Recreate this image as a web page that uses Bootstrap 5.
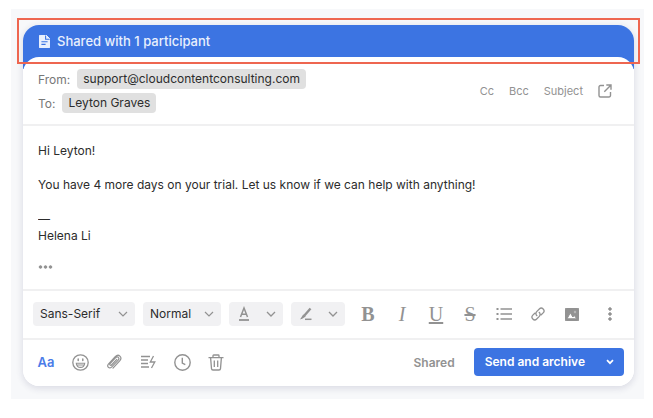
<!DOCTYPE html>
<html lang="en">
<head>
<meta charset="utf-8">
<meta name="viewport" content="width=device-width, initial-scale=1">
<title>Shared draft</title>
<link href="https://cdn.jsdelivr.net/npm/bootstrap@5.3.0/dist/css/bootstrap.min.css" rel="stylesheet">
<style>
  :root { --accent: #3c74e2; --muted: #929292; --line: #f0f0f1; --ink: #2c2c2c; }
  body { font: 12px/17px Inter, "Liberation Sans", sans-serif; color: var(--ink); background: #fff; padding: 9px 9px 18px 11px; }
  .stage { background: #f7f8fa; padding: 16px 10px 13px 12px; }
  .composer { background: #fff; border-radius: 16px; box-shadow: 0 2px 6px 1px rgba(40, 45, 90, .12); }
  .banner { background: var(--accent); color: #e9f0fd; border-radius: 16px 16px 0 0; padding: 0 16px 12px; height: 44px; font-size: 13px; font-weight: 500; gap: 7px; }
  .highlight { position: absolute; inset: -7px -6px 5px -6px; border: 2px solid #ee6650; z-index: 2; pointer-events: none; }
  .sheet { background: #fff; border-radius: 16px; margin-top: -12px; position: relative; }
  .rule { border-bottom: 2px solid var(--line); }
  .headers { padding: 12px 22px 11px 15px; }
  .field-name { color: #777; margin-right: 7px; }
  .chip { background: #e0e0e0; border-radius: 4px; padding: 0 6px; line-height: 20px; }
  .plain { border: 0; background: none; padding: 0; color: var(--muted); display: inline-flex; align-items: center; justify-content: center; }
  .side { font-size: 11px; font-weight: 500; color: #a0a0a0; gap: 15px; }
  .message { display: block; width: 100%; border: 0; resize: none; outline: 0; padding: 0; height: 106px; line-height: 17px; color: var(--ink); overflow: hidden; }
  .body-area { padding: 16px 15px 10px; }
  .quoted { margin-top: 9px; }
  .tools { padding: 11px 14px 12px 10px; }
  .pick { width: auto; height: 24px; border: 0; border-radius: 4px; padding: 0 24px 0 7px; font-size: 12px; line-height: 24px; color: var(--ink); background-color: #f1f1f3; background-size: 10px 10px; background-position: right 7px center;
    background-image: url("data:image/svg+xml,%3Csvg xmlns='http://www.w3.org/2000/svg' viewBox='0 0 10 10'%3E%3Cpath d='M1 3l4 4 4-4' fill='none' stroke='%23929292' stroke-width='1.2'/%3E%3C/svg%3E"); }
  .pick-font { width: 102px; }
  .pick-size { width: 78px; }
  .swatch { width: 54px; height: 24px; background: #f1f1f3; border-radius: 4px; justify-content: space-between; padding: 0 7px 0 8px; }
  .format { width: 20px; height: 24px; }
  .format-set { gap: 14px; margin-left: 5px; }
  .serif { font: 20px/24px "Liberation Serif", serif; }
  .footer-bar { padding: 8px 10px 10px 13px; }
  .acts { gap: 14px; }
  .act { width: 20px; height: 24px; }
  .aa { font-size: 13px; font-weight: 600; color: #4a7ce8; }
  .shared-label { font-weight: 600; color: var(--muted); margin-right: 19px; }
  .send { background: var(--accent); color: #fff; border: 0; font-size: 12px; line-height: 18px; font-weight: 600; height: 28px; padding: 0 11px; border-radius: 4px; }
  .send:hover { background: #3368d4; color: #fff; }
  .send-more { padding: 0; width: 29px; flex: none; }
  svg { display: block; fill: none; stroke: currentColor; flex: none; }
</style>
</head>
<body>
<main class="stage">
  <section class="composer" aria-label="Reply">
    <div class="position-relative">
      <div class="banner d-flex align-items-center">
        <svg width="11" height="13" viewBox="0 0 11 13" stroke="none" aria-hidden="true"><path fill="#e9f0fd" d="M1.500 0H7l4 4v7.500a1.500 1.500 0 0 1-1.500 1.500h-8A1.500 1.500 0 0 1 0 11.500v-10A1.500 1.500 0 0 1 1.500 0z"/><path d="M6.600 .6v3.700h4M2.400 6.700h6.200M2.400 9.400h4.200" stroke="#3c74e2" stroke-width="1.100"/></svg>
        <span>Shared with 1 participant</span>
      </div>
      <div class="highlight"></div>
    </div>
    <div class="sheet">
      <header class="headers rule d-flex align-items-center justify-content-between">
        <div class="d-flex flex-column gap-1">
          <div class="d-flex align-items-center"><span class="field-name">From:</span><span class="chip">support@cloudcontentconsulting.com</span></div>
          <div class="d-flex align-items-center"><span class="field-name">To:</span><span class="chip">Leyton Graves</span></div>
        </div>
        <div class="side d-flex align-items-center">
          <button type="button" class="plain">Cc</button>
          <button type="button" class="plain">Bcc</button>
          <button type="button" class="plain">Subject</button>
          <button type="button" class="plain" aria-label="Open in new window"><svg width="14" height="14" viewBox="0 0 14 14" stroke-width="1.400"><path d="M6 1.500H2.500a1.500 1.500 0 0 0-1.500 1.500v8.500A1.500 1.500 0 0 0 2.500 13H11a1.500 1.500 0 0 0 1.500-1.500V8M8.300 1H13v4.700M13 1L6.300 7.700"/></svg></button>
        </div>
      </header>
      <div class="body-area rule">
        <textarea class="message" aria-label="Message" spellcheck="false">Hi Leyton!

You have 4 more days on your trial. Let us know if we can help with anything!

—
Helena Li</textarea>
        <button type="button" class="plain quoted" aria-label="Show quoted text"><svg width="15" height="18" viewBox="0 0 15 18" stroke="none"><g fill="#929292"><circle cx="2.500" cy="10" r="1.300"/><circle cx="7.500" cy="10" r="1.300"/><circle cx="12.500" cy="10" r="1.300"/></g></svg></button>
      </div>
      <div class="tools rule d-flex align-items-center justify-content-between">
        <div class="d-flex align-items-center gap-2">
          <select class="form-select pick pick-font" aria-label="Font"><option>Sans-Serif</option><option>Serif</option></select>
          <select class="form-select pick pick-size" aria-label="Text size"><option>Normal</option><option>Large</option></select>
          <button type="button" class="plain swatch" aria-label="Text colour">
            <svg width="14" height="16" viewBox="0 0 14 16"><path d="M3.500 11L7 2l3.500 9M4.600 8.200h4.800" stroke-width="1.500"/><path d="M2 14h10" stroke-width="1.800"/></svg>
            <svg width="10" height="10" viewBox="0 0 10 10"><path d="M1 3l4 4 4-4" stroke-width="1.300"/></svg>
          </button>
          <button type="button" class="plain swatch" aria-label="Highlight colour">
            <svg width="14" height="16" viewBox="0 0 14 16"><path d="M11.500 2.500L5.200 9.800" stroke-width="2.300"/><path d="M4.200 8.400l2.500 2-2.700 1.800L1 13.500z" fill="currentColor" stroke="none"/><path d="M6 13.300h6.500" stroke-width="1.500"/></svg>
            <svg width="10" height="10" viewBox="0 0 10 10"><path d="M1 3l4 4 4-4" stroke-width="1.300"/></svg>
          </button>
          <div class="format-set d-flex">
            <button type="button" class="plain format serif fw-bold">B</button>
            <button type="button" class="plain format serif fst-italic">I</button>
            <button type="button" class="plain format serif text-decoration-underline">U</button>
            <button type="button" class="plain format serif text-decoration-line-through">S</button>
            <button type="button" class="plain format" aria-label="Bulleted list"><svg width="16" height="14" viewBox="0 0 16 14"><path d="M4.500 2H16M4.500 7H16M4.500 12H16" stroke-width="1.500"/><path d="M.5 2h2M.5 7h2M.5 12h2" stroke-width="2"/></svg></button>
            <button type="button" class="plain format" aria-label="Insert link"><svg width="14" height="14" viewBox="0 0 16 16" stroke-width="1.500" stroke-linecap="round"><path d="M6.700 9.900A3.200 3.200 0 0 1 6.500 5.300l3-3a3.100 3.100 0 0 1 4.400 4.400l-2.200 2.200M9.300 6.100a3.200 3.200 0 0 1 .2 4.600l-3 3a3.100 3.100 0 0 1-4.400-4.400l2.200-2.200"/></svg></button>
            <button type="button" class="plain format" aria-label="Insert image"><svg width="14" height="13" viewBox="0 0 14 13" stroke="none"><rect width="14" height="13" rx="2" fill="#929292"/><path d="M2 10.800l3.300-6 2.600 4.200 1.300-1.600 2.600 3.400z" fill="#fff"/><circle cx="10" cy="4" r="1.200" fill="#fff"/></svg></button>
          </div>
        </div>
        <button type="button" class="plain format" aria-label="More formatting"><svg width="4" height="14" viewBox="0 0 4 14" stroke="none"><g fill="#929292"><circle cx="2" cy="2" r="1.300"/><circle cx="2" cy="7" r="1.300"/><circle cx="2" cy="12" r="1.300"/></g></svg></button>
      </div>
      <footer class="footer-bar d-flex align-items-center justify-content-between">
        <div class="acts d-flex align-items-center">
          <button type="button" class="plain act aa">Aa</button>
          <button type="button" class="plain act" aria-label="Emoji"><svg width="17" height="17" viewBox="0 0 17 17"><circle cx="8.500" cy="8.500" r="7.700" stroke-width="1.300"/><path d="M4.300 9.200h8.400c-.2 2.600-2 4.200-4.200 4.200s-4-1.600-4.200-4.200zM4.900 11h7.200" stroke-width="1.100"/><path d="M6.200 5v1.600M10.800 5v1.600" stroke-width="1.500" stroke-linecap="round"/></svg></button>
          <button type="button" class="plain act" aria-label="Attach file"><svg width="16" height="17" viewBox="0 0 16 17" stroke-width="1.200" stroke-linecap="round"><path d="M10.800 5.400L5.500 11c-.9 1-2.300-.2-1.400-1.300l5.600-6c1.900-1.900 4.300.3 2.500 2.400l-6.400 6.800c-2.600 2.500-5.500-.4-3.200-3l6.600-7.200c3.400-3.400 7.700.4 4.500 4.200l-6.700 7.200"/></svg></button>
          <button type="button" class="plain act" aria-label="Insert template"><svg width="16" height="14" viewBox="0 0 16 14" stroke-width="1.300"><path d="M1 1.500h9M1 5h7M1 8.500h7M1 12h8"/><path d="M13.500 1L10.300 7h4.500L11.500 13"/></svg></button>
          <button type="button" class="plain act" aria-label="Send later"><svg width="17" height="17" viewBox="0 0 17 17" stroke-width="1.400"><circle cx="8.500" cy="8.500" r="7.700"/><path d="M8.300 3.800v5.300l3 1.500"/></svg></button>
          <button type="button" class="plain act" aria-label="Discard"><svg width="16" height="17" viewBox="0 0 16 17" stroke-width="1.300"><path d="M.5 3.600h15M5 3.500V1.700Q5 1 5.700 1h4.600q.7 0 .7.700v1.800M2.600 3.600l.9 11q.1 1.400 1.500 1.400h6q1.400 0 1.500-1.400l.9-11M6.300 6.500v6.500M9.700 6.500v6.500"/></svg></button>
        </div>
        <div class="d-flex align-items-center">
          <span class="shared-label">Shared</span>
          <div class="btn-group">
            <button type="button" class="btn send">Send and archive</button>
            <button type="button" class="btn send send-more d-flex align-items-center justify-content-center" aria-label="More send options"><svg width="8" height="6" viewBox="0 0 8 6"><path d="M1 1.200l3 3 3-3" stroke-width="1.700"/></svg></button>
          </div>
        </div>
      </footer>
    </div>
  </section>
</main>
<script src="https://cdn.jsdelivr.net/npm/bootstrap@5.3.0/dist/js/bootstrap.bundle.min.js"></script>
</body>
</html>
